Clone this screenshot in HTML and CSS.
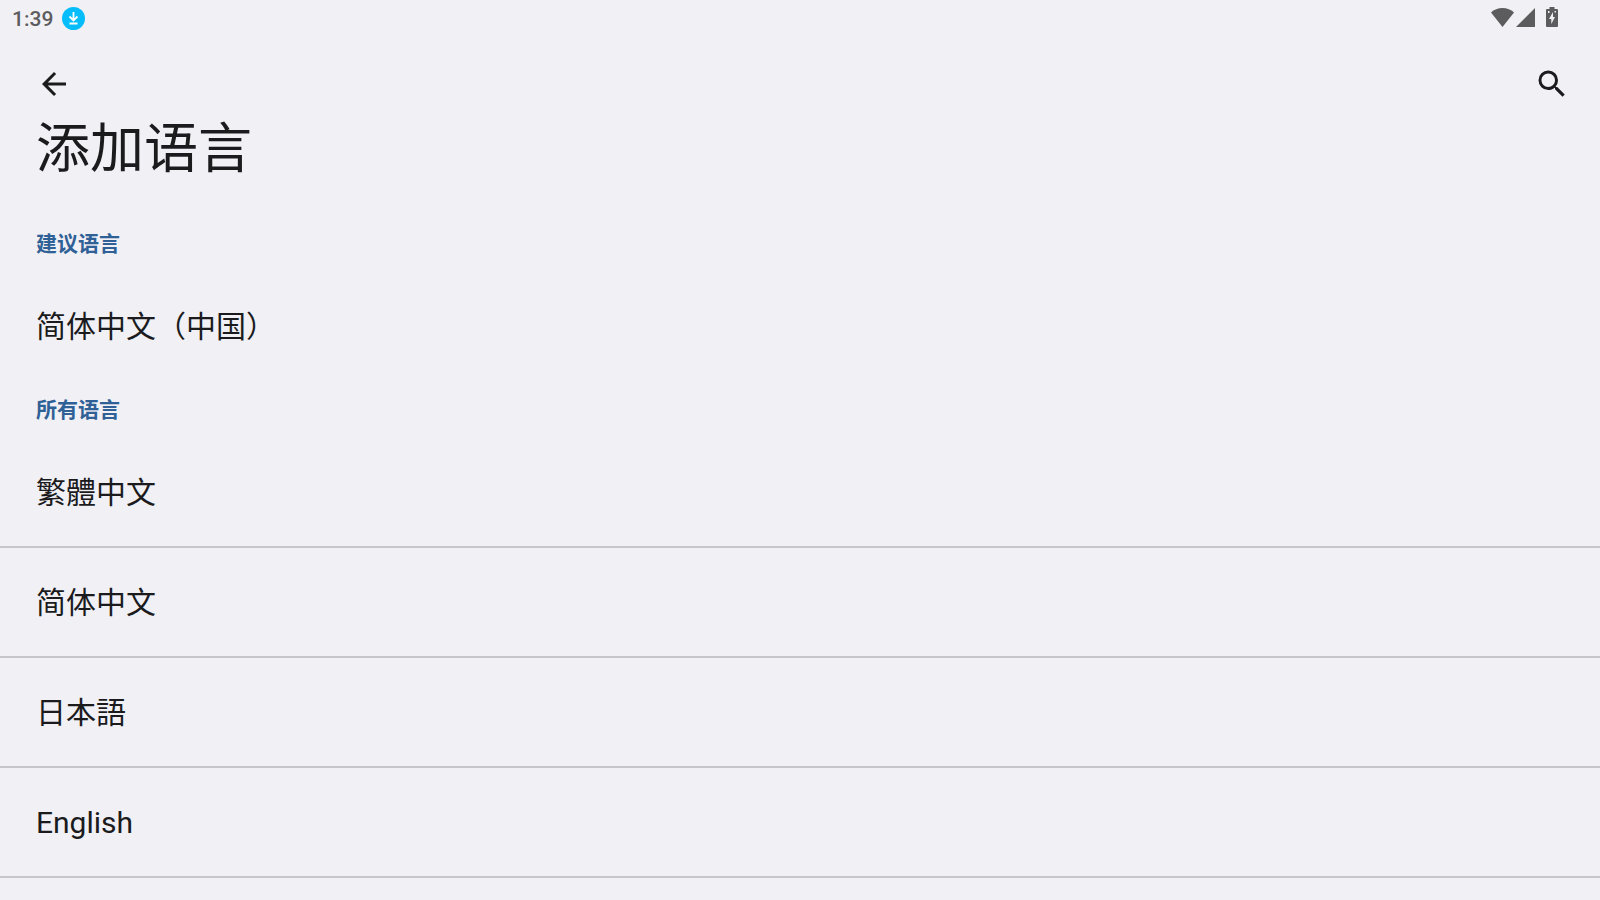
FILE: index.html
```html
<!DOCTYPE html>
<html lang="zh-CN">
  <head>
    <meta charset="utf-8">
    <meta name="viewport" content="width=device-width, initial-scale=1">
    <title>添加语言</title>
    <link rel="stylesheet" href="styles.css">
  </head>

  <body>
    <!-- System status bar -->
    <div class="status-bar">
      <span class="clock">1:39</span>
      <svg class="download-icon" viewBox="0 0 24 24" aria-hidden="true">
        <circle cx="12.500" cy="11.500" r="11.500" fill="#06bdfb"/>
        <path d="M12.500 5v8.500M8.500 9.500l4 4 4-4M8.500 16.500h8" fill="none" stroke="#fff" stroke-width="1.8"/>
      </svg>
      <div class="status-icons">
        <svg class="wifi-icon" viewBox="0 0 24 20" aria-hidden="true">
          <path d="M12.500 20L1 5.500C4 2.500 8 1 12.500 1S21 2.500 24 5.500z"/>
        </svg>
        <svg class="signal-icon" viewBox="0 0 20 20" aria-hidden="true">
          <path d="M1 20L20 1v19z"/>
        </svg>
        <svg class="battery-icon" viewBox="0 0 12 20" aria-hidden="true">
          <path fill-rule="evenodd" d="M3.500 0h5v2H11a1 1 0 0 1 1 1v16a1 1 0 0 1-1 1H1a1 1 0 0 1-1-1V3a1 1 0 0 1 1-1h2.500zM7 5l-4 7h2.300v5L9 10H7zM2 4v2h1.500V4zM8.500 4v1.500H10V4z"/>
        </svg>
      </div>
    </div>

    <header class="app-bar">
      <button class="icon-button" type="button" aria-label="返回">
        <svg viewBox="0 0 24 24">
          <path d="M20 11H7.830l5.590-5.590L12 4l-8 8 8 8 1.410-1.410L7.830 13H20v-2z"/>
        </svg>
      </button>
      <button class="icon-button" type="button" aria-label="搜索">
        <svg viewBox="0 0 24 24">
          <path d="M15.500 14h-.79l-.28-.27A6.471 6.471 0 0 0 16 9.500 6.500 6.500 0 1 0 9.500 16c1.610 0 3.090-.59 4.230-1.570l.27.28v.79l5 4.990L20.490 19l-4.990-5zm-6 0C7.010 14 5 11.990 5 9.500S7.010 5 9.500 5 14 7.010 14 9.500 11.990 14 9.500 14z"/>
        </svg>
      </button>
    </header>

    <main>
      <h1>添加语言</h1>

      <section>
        <h2>建议语言</h2>
        <ul class="language-list">
          <li><button type="button">简体中文（中国）</button></li>
        </ul>
      </section>

      <section>
        <h2>所有语言</h2>
        <ul class="language-list divided">
          <li><button type="button" lang="zh-TW">繁體中文</button></li>
          <li><button type="button">简体中文</button></li>
          <li><button type="button" lang="ja">日本語</button></li>
          <li><button type="button" lang="en">English</button></li>
        </ul>
      </section>
    </main>
  </body>
</html>
```

FILE: styles.css
```css
* {
  box-sizing: border-box;
}

body {
  margin: 0;
  min-height: 100vh;
  background: #f0f0f5;
  color: #1b1b1d;
  font-family: Roboto, "Noto Sans CJK SC", sans-serif;
}

button {
  border: 0;
  background: none;
  color: inherit;
  font-family: inherit;
  cursor: pointer;
}

svg {
  display: block;
  fill: currentColor;
}

.status-bar {
  display: flex;
  align-items: center;
  height: 38px;
  padding: 0 42px 0 12px;
  color: #5c5c5f;
}

.clock {
  font-size: 21px;
  font-weight: 500;
  line-height: 36px;
}

.download-icon {
  width: 24px;
  height: 24px;
  margin-left: 8px;
}

.status-icons {
  display: flex;
  margin-left: auto;
  padding-bottom: 4px;
}

.wifi-icon {
  width: 24px;
  height: 20px;
}

.signal-icon {
  width: 20px;
  height: 20px;
  margin-left: 1px;
}

.battery-icon {
  width: 12px;
  height: 20px;
  margin-left: 11px;
}

.app-bar {
  display: flex;
  justify-content: space-between;
  padding: 28px 30px 15px 36px;
}

.icon-button {
  width: 36px;
  height: 36px;
  padding: 0;
}

h1 {
  margin: 0 0 33px;
  padding: 0 36px;
  font-size: 54px;
  font-weight: 400;
  line-height: 66px;
}

h2 {
  margin: 0;
  padding: 0 36px;
  color: #2f6096;
  font-size: 21px;
  font-weight: 600;
  line-height: 56px;
}

.language-list {
  margin: 0;
  padding: 0;
  list-style: none;
}

.language-list button {
  display: block;
  width: 100%;
  padding: 0 36px;
  font-size: 30px;
  line-height: 110px;
  text-align: left;
}

.divided li {
  border-bottom: 2px solid #c5c5ca;
}

.divided button {
  padding-top: 2px;
  line-height: 106px;
}

[lang="zh-TW"] {
  font-family: Roboto, "Noto Sans CJK TC", sans-serif;
}

[lang="ja"] {
  font-family: Roboto, "Noto Sans CJK JP", sans-serif;
}
```
